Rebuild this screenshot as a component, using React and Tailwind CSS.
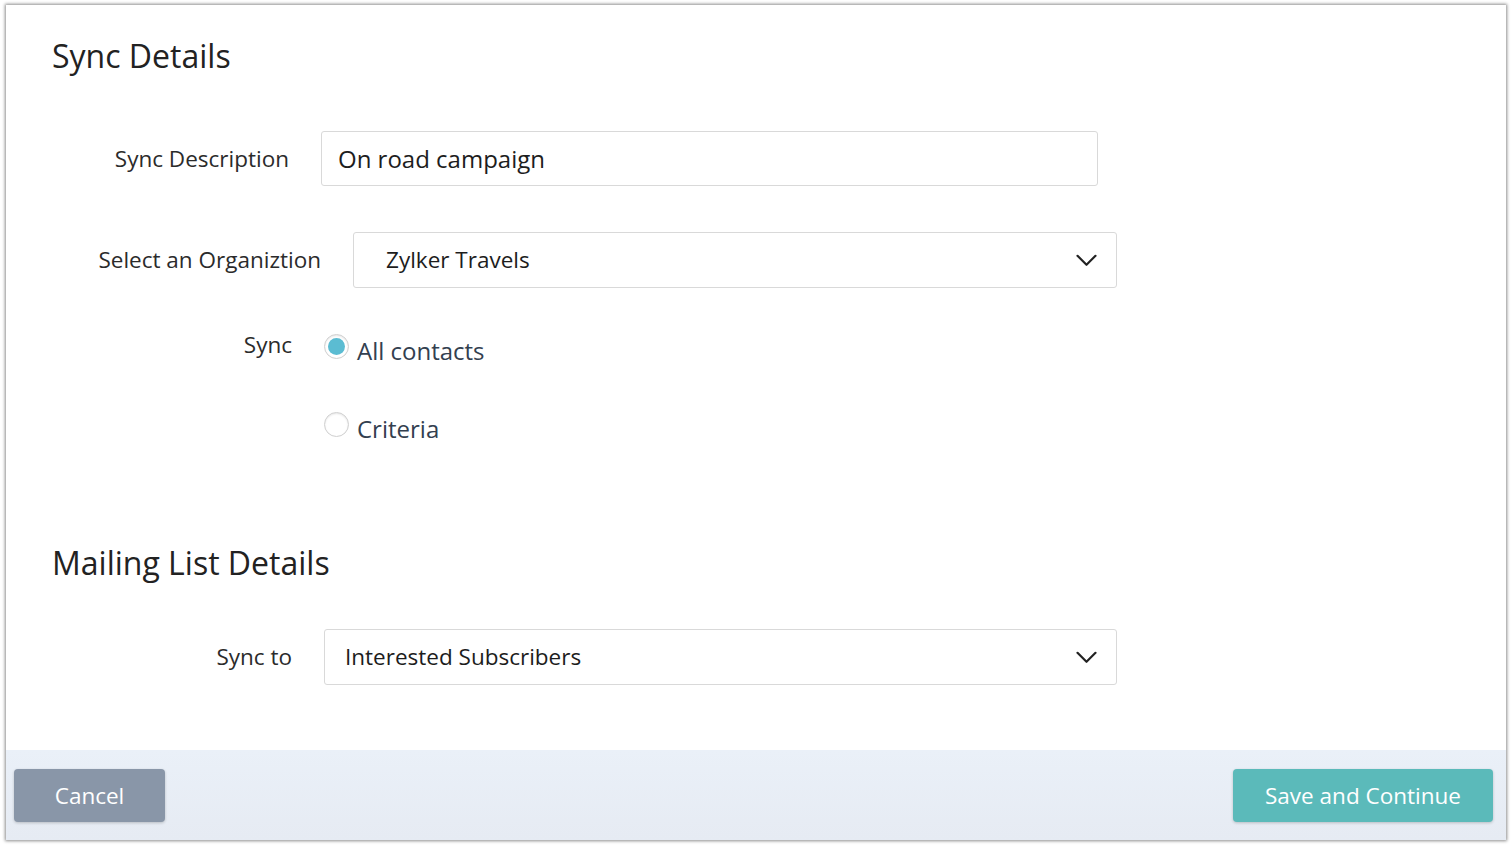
import React from "react";

function Chevron() {
  return (
    <svg width="21" height="13" viewBox="0 0 21 13" fill="none">
      <path d="M1.5 1.8 L10.5 10.8 L19.5 1.8" stroke="#222" strokeWidth="2.2" strokeLinecap="round" strokeLinejoin="round" />
    </svg>
  );
}

export default function App() {
  return (
    <div className="w-[1512px] h-[846px] bg-white" style={{ fontFamily: '"Open Sans", sans-serif' }}>
      <div className="pt-[5px] pl-[6px]">
        <div className="w-[1500px] h-[835px] bg-white flex flex-col shadow-[0_0_3px_1px_rgba(0,0,0,0.45)]">
          <div className="flex-1 flex flex-col">
            <h1 className="ml-[46px] mt-[29px] text-[32px] leading-[44px] text-[#222]">Sync Details</h1>

            <div className="flex items-center mt-[53px]">
              <div className="ml-[94px] w-[189px] text-[22.5px] text-[#2b2b2b] text-right whitespace-nowrap">Sync Description</div>
              <div className="ml-[32px] w-[777px] h-[55px] border border-[#d9d9d9] rounded-[3px] flex items-center pl-[16px] text-[24px] text-[#1d1d1d]">On road campaign</div>
            </div>

            <div className="flex items-center mt-[46px]">
              <div className="ml-[85px] w-[230px] text-[22.5px] text-[#2b2b2b] text-right whitespace-nowrap">Select an Organiztion</div>
              <div className="ml-[32px] w-[764px] h-[56px] border border-[#d9d9d9] rounded-[3px] flex items-center justify-between pl-[32px] pr-[19px] text-[22.5px] text-[#1d1d1d]">
                <span>Zylker Travels</span>
                <Chevron />
              </div>
            </div>

            <div className="flex mt-[46px]">
              <div className="ml-[200px] w-[86px] text-[22.5px] text-[#2b2b2b] leading-[28px] text-right mt-[-3px]">Sync</div>
              <div className="ml-[32px] flex flex-col gap-[47px]">
                <div className="flex items-start">
                  <span className="w-[25px] h-[25px] shrink-0 rounded-full border border-[#cfcfcf] flex items-center justify-center bg-white shadow-[inset_0_1px_2px_rgba(0,0,0,0.1)]">
                    <span className="w-[17px] h-[17px] rounded-full bg-[#5bbcd2]"></span>
                  </span>
                  <span className="ml-[8px] mt-[3px] text-[24px] leading-[28px] text-[#33404f]">All contacts</span>
                </div>
                <div className="flex items-start">
                  <span className="w-[25px] h-[25px] shrink-0 rounded-full border border-[#cfcfcf] bg-white shadow-[inset_0_1px_2px_rgba(0,0,0,0.1)]"></span>
                  <span className="ml-[8px] mt-[3px] text-[24px] leading-[28px] text-[#33404f]">Criteria</span>
                </div>
              </div>
            </div>

            <h2 className="ml-[46px] mt-[98px] text-[32px] leading-[44px] text-[#222]">Mailing List Details</h2>

            <div className="flex items-center mt-[44px]">
              <div className="ml-[200px] w-[86px] text-[22.5px] text-[#2b2b2b] text-right whitespace-nowrap">Sync to</div>
              <div className="ml-[32px] w-[793px] h-[56px] border border-[#d9d9d9] rounded-[3px] flex items-center justify-between pl-[20px] pr-[19px] text-[22.5px] text-[#1d1d1d]">
                <span>Interested Subscribers</span>
                <Chevron />
              </div>
            </div>
          </div>

          <div className="h-[90px] bg-gradient-to-b from-[#eaf0f8] to-[#e6ebf3] flex items-center justify-between pl-[8px] pr-[13px] pt-[1px]">
            <button className="w-[151px] h-[53px] rounded-[4px] bg-[#8996a8] text-white text-[22.5px] shadow-[0_1px_3px_rgba(0,0,0,0.2)]">Cancel</button>
            <button className="w-[260px] h-[53px] rounded-[4px] bg-[#5bbaba] text-white text-[22.5px] shadow-[0_1px_3px_rgba(0,0,0,0.2)]">Save and Continue</button>
          </div>
        </div>
      </div>
    </div>
  );
}
